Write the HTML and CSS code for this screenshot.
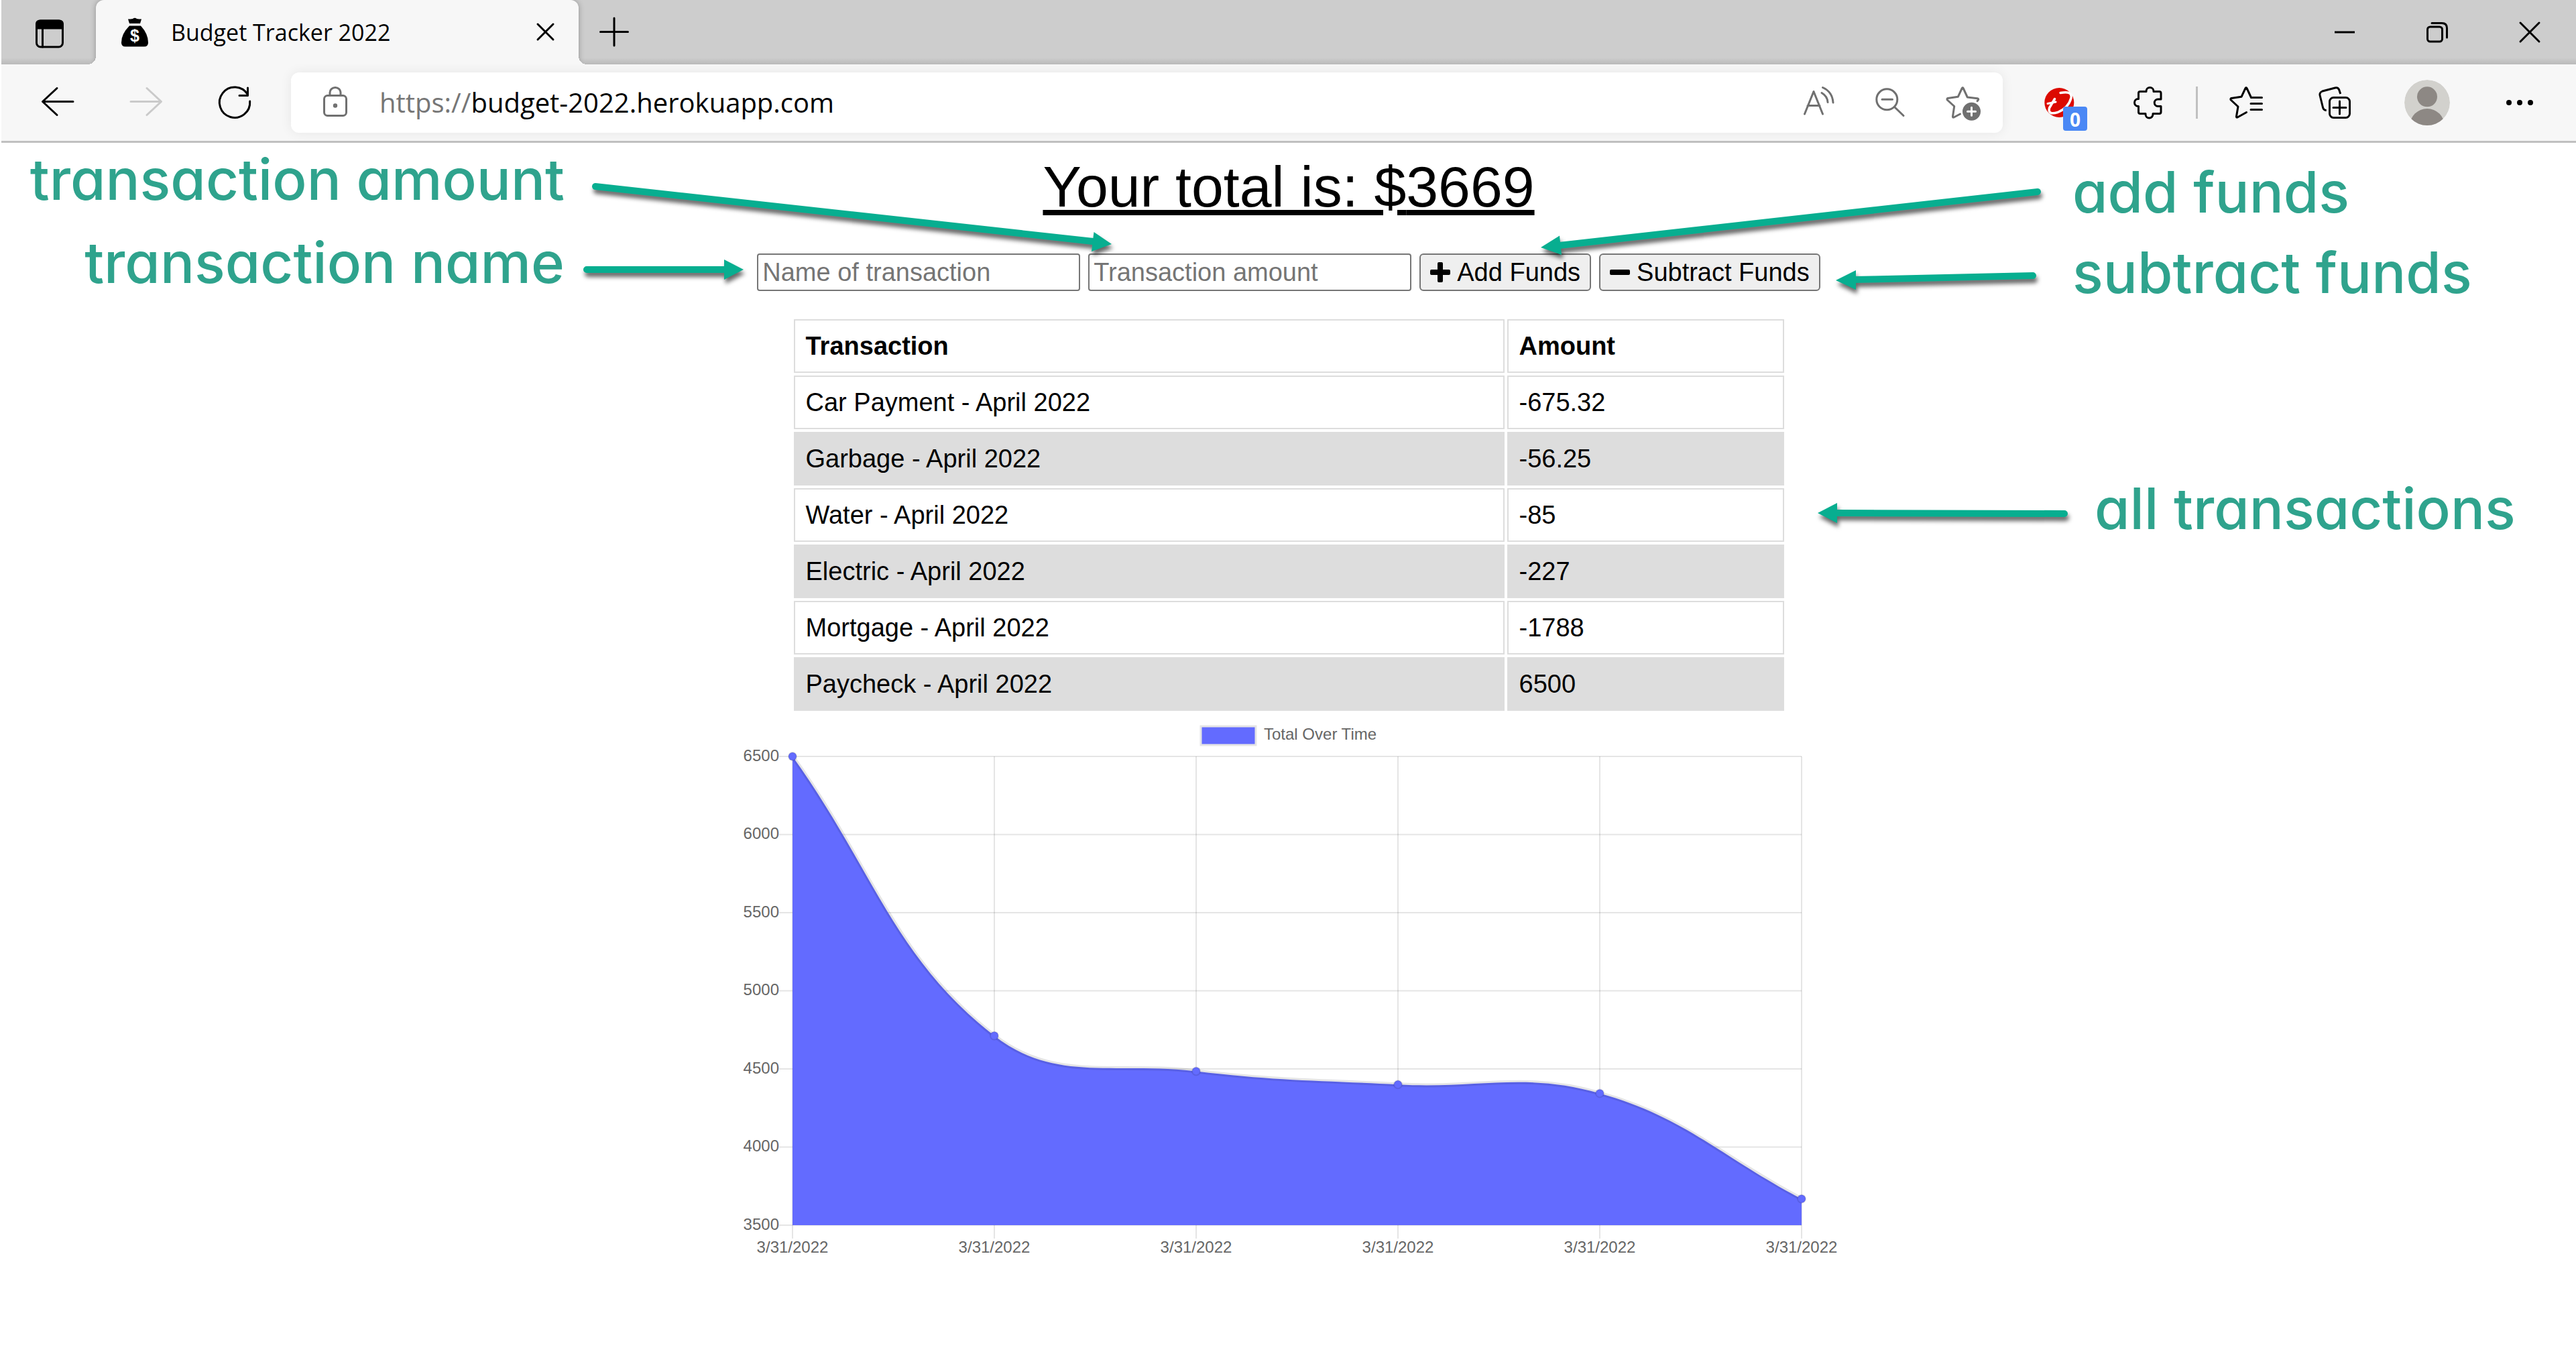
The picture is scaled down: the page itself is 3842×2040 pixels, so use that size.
FILE: index.html
```html
<!DOCTYPE html>
<html lang="en">
<head>
<meta charset="utf-8">
<title>Budget Tracker 2022</title>
<link rel="stylesheet" href="styles.css">
</head>
<body>
<header class="browser">
  <div class="tab-strip">
    <button class="icon-button tab-actions" aria-label="Tab actions">
      <svg class="icon" viewBox="0 0 60 60"><rect x="10.500" y="13" width="39" height="39" rx="6"/><path d="M10.500 24V18q0-5 5-5h29q5 0 5 5v6Z" fill="#000"/><path d="M19.500 24v28"/></svg>
    </button>
    <div class="tab">
      <svg class="favicon" viewBox="0 0 42 44"><path d="M11 2.500q4 0 7-.5 3-2.500 6 0 3 .5 7 .5l-2 6.500H13Z"/><path d="M13 12.500h17q11 12 11 25 0 6-6 6H7q-6 0-6-6 0-13 12-25Z"/><text x="21" y="36" text-anchor="middle" class="favicon-sign">$</text></svg>
      <span class="tab-title">Budget Tracker 2022</span>
      <button class="icon-button" aria-label="Close tab">
        <svg class="icon" viewBox="0 0 60 60"><path d="M18 18l23 23M41 18L18 41"/></svg>
      </button>
    </div>
    <button class="icon-button" aria-label="New tab">
      <svg class="icon" viewBox="0 0 60 60"><path d="M30 9v41M9.500 29.500h41"/></svg>
    </button>
    <div class="window-controls">
      <button class="window-button" aria-label="Minimize"><svg class="icon" viewBox="0 0 60 60"><path d="M15 30h30" stroke-linecap="butt"/></svg></button>
      <button class="window-button" aria-label="Restore"><svg class="icon" viewBox="0 0 60 60"><rect x="15.500" y="22" width="22" height="22" rx="4"/><path d="M22 16.500h15q7.500 0 7.500 7.500v14"/></svg></button>
      <button class="window-button" aria-label="Close window"><svg class="icon" viewBox="0 0 60 60"><path d="M16 16l28 28M44 16L16 44"/></svg></button>
    </div>
  </div>
  <div class="toolbar">
    <nav class="history">
      <button class="icon-button" aria-label="Back"><svg class="icon" viewBox="0 0 60 60"><path d="M53 28.500H8M29 8.500L7.500 28.500 29 48.500"/></svg></button>
      <button class="icon-button disabled" aria-label="Forward"><svg class="icon" viewBox="0 0 60 60"><path d="M7 28.500h45M31 8.500l21.500 20L31 48.500"/></svg></button>
      <button class="icon-button" aria-label="Refresh"><svg class="icon" viewBox="0 0 60 60"><path d="M49.500 18A22.700 22.700 0 1 0 52.700 28M49.500 8v11.500H37"/></svg></button>
    </nav>
    <div class="address">
      <svg class="icon muted" viewBox="0 0 60 60"><rect x="13.500" y="19.500" width="33" height="30" rx="5"/><path d="M22 19v-4a8 7.500 0 0 1 16 0v4"/><circle cx="30" cy="34.500" r="1.700"/></svg>
      <p class="url"><span class="scheme">https://</span>budget-2022.herokuapp.com</p>
      <div class="address-actions">
        <button class="icon-button muted" aria-label="Read aloud"><svg class="icon" viewBox="0 0 60 60"><path d="M8.500 47L22 13.500 35.500 47M13 34.500h18M34 15.500q8.500 5 9 14M35.500 7.500Q50 14 51 30"/></svg></button>
        <button class="icon-button muted" aria-label="Zoom out"><svg class="icon" viewBox="0 0 60 60"><circle cx="23.300" cy="25.300" r="15.500"/><path d="M16 25.300h15.500M34.500 36.500L48 49.500"/></svg></button>
        <button class="icon-button muted" aria-label="Add to favorites"><svg class="icon" viewBox="0 0 60 60"><path d="M24.500 47L15 52q-1.800.5-1.500-1.500l2.200-15L5.300 26q-1-1.800.8-2.500l15.200-2.200 6-12.800q.9-1.500 1.800 0l6.200 13.500 14.700 1.700q2.500.6 1.500 2.200l-1.500 1.800"/><circle cx="41.500" cy="43.300" r="13.500" fill="currentColor" stroke="none"/><path d="M35.500 43.300h12M41.500 37.300v12" stroke="#fff"/></svg></button>
      </div>
    </div>
    <nav class="extensions">
      <button class="icon-button has-badge" aria-label="Security extension">
        <svg class="icon" viewBox="0 0 60 60"><circle cx="30.300" cy="30" r="22" fill="#dc0a00" stroke="none"/><path d="M32 15.500Q50 12 48 23 44 38 28 44.500 13 49 15.500 38L23.500 24.500" stroke="#fff" stroke-width="3.500"/><path d="M13 31.500L25 29" stroke="#fff"/></svg>
        <span class="badge">0</span>
      </button>
      <div class="favorites-group">
        <button class="icon-button" aria-label="Extensions"><svg class="icon" viewBox="0 0 60 60"><path d="M17 13.500h9V13a5.500 5.500 0 0 1 11 0v.5h8.500q2.500 0 2.500 2.500v9h-4.500a5 5 0 0 0 0 10.500H48V44q0 2.500-2.500 2.500H36v1a5.500 5.500 0 0 1-11 0v-1h-8q-2.500 0-2.500-2.500v-8.500H14a5.500 5.500 0 0 1 0-11h.5V16q0-2.500 2.500-2.500Z"/></svg></button>
        <span class="divider"></span>
        <button class="icon-button" aria-label="Favorites"><svg class="icon" viewBox="0 0 60 60"><path d="M32.500 44.500L19 52q-1.800.5-1.500-1.500L20 36 9.200 26q-1-1.800.8-2.500l15-2.200 6-12.800q1-1.500 2 0l6.500 14h16M39 31.500h16.500M39 40.500h16.500"/></svg></button>
      </div>
      <button class="icon-button" aria-label="Collections"><svg class="icon" viewBox="0 0 60 60"><rect x="22.500" y="22.500" width="30" height="30" rx="6"/><path d="M37.500 28v19M28 37.500h19"/><path d="M38.700 17l-2-6q-1.700-4-6-3l-19 5q-4.500 2-3.700 6l4.700 19q1.300 3.500 5 3.500" stroke-linecap="butt"/></svg></button>
      <button class="profile" aria-label="Profile"><svg class="avatar" viewBox="0 0 68 68"><clipPath id="disc"><circle cx="34" cy="34" r="34"/></clipPath><g clip-path="url(#disc)"><circle cx="34" cy="34" r="34" fill="#d2d1cd"/><circle cx="34" cy="25.300" r="15" fill="#8d8884"/><circle cx="34" cy="69" r="26" fill="#8d8884"/></g></svg></button>
      <button class="icon-button" aria-label="Settings and more"><svg class="icon" viewBox="0 0 60 60"><g fill="#000" stroke="none"><circle cx="14" cy="30" r="4"/><circle cx="30" cy="30" r="4"/><circle cx="46" cy="30" r="4"/></g></svg></button>
    </nav>
  </div>
</header>

<main class="page">
  <aside class="notes notes-left">
    <p class="note">transaction amount</p>
    <p class="note">transaction name</p>
  </aside>

  <section class="tracker">
    <h1 class="total">Your total is: $<span id="total">3669</span></h1>
    <form class="entry">
      <input class="field" type="text" placeholder="Name of transaction" aria-label="Name of transaction">
      <input class="field" type="text" inputmode="numeric" placeholder="Transaction amount" aria-label="Transaction amount">
      <button class="action" type="button"><svg class="sign" viewBox="0 0 30 30"><rect y="11" width="30" height="8" rx="2"/><rect x="11" width="8" height="30" rx="2"/></svg>Add Funds</button>
      <button class="action" type="button"><svg class="sign" viewBox="0 0 30 30"><rect y="11" width="30" height="8" rx="2"/></svg>Subtract Funds</button>
    </form>
    <table class="transactions">
      <thead><tr><th class="name-column">Transaction</th><th>Amount</th></tr></thead>
      <tbody>
        <tr><td>Car Payment - April 2022</td><td>-675.32</td></tr>
        <tr><td>Garbage - April 2022</td><td>-56.25</td></tr>
        <tr><td>Water - April 2022</td><td>-85</td></tr>
        <tr><td>Electric - April 2022</td><td>-227</td></tr>
        <tr><td>Mortgage - April 2022</td><td>-1788</td></tr>
        <tr><td>Paycheck - April 2022</td><td>6500</td></tr>
      </tbody>
    </table>
    <svg class="chart" viewBox="0 0 1640 820" role="img" aria-label="Total over time">
      <rect x="689" y="19" width="82" height="28" fill="#636bff" stroke="#e5e5e5" stroke-width="3"/>
      <text x="783" y="39">Total Over Time</text>
      <path class="grid" d="M60 64H1585M60 180.500H1585M60 297H1585M60 413.500H1585M60 530H1585M60 646.500H1585M60 763H1585"/>
      <path class="grid" d="M80 64V783M381 64V783M682 64V783M983 64V783M1284 64V783M1585 64V783"/>
      <path class="area" d="M80 64C200 231 230 363 381 480.600C471 551 561 519 682 533.500C802 548 862 547 983 553.300C1103 560 1171 534 1284 566.400C1412 602 1465 661 1585 723.800V763H80Z"/>
      <path class="curve" d="M80 64C200 231 230 363 381 480.600C471 551 561 519 682 533.500C802 548 862 547 983 553.300C1103 560 1171 534 1284 566.400C1412 602 1465 661 1585 723.800"/>
      <g class="points"><circle cx="80" cy="64" r="6"/><circle cx="381" cy="480.600" r="6"/><circle cx="682" cy="533.500" r="6"/><circle cx="983" cy="553.300" r="6"/><circle cx="1284" cy="566.400" r="6"/><circle cx="1585" cy="723.800" r="6"/></g>
      <g text-anchor="end"><text x="60" y="71">6500</text><text x="60" y="187">6000</text><text x="60" y="304">5500</text><text x="60" y="420">5000</text><text x="60" y="537">4500</text><text x="60" y="653">4000</text><text x="60" y="770">3500</text></g>
      <g text-anchor="middle"><text x="80" y="804">3/31/2022</text><text x="381" y="804">3/31/2022</text><text x="682" y="804">3/31/2022</text><text x="983" y="804">3/31/2022</text><text x="1284" y="804">3/31/2022</text><text x="1585" y="804">3/31/2022</text></g>
    </svg>
  </section>

  <aside class="notes notes-right">
    <p class="note">add funds</p>
    <p class="note">subtract funds</p>
    <p class="note note-list">all transactions</p>
  </aside>

  <svg class="arrows" viewBox="722 213 2400 600" aria-hidden="true">
    <path d="M888 278L1630 360M875 402H1082M3039 286L2326 366M3032 411L2766 417M3079 766L2738 765"/>
    <g><path d="M1658 364L1631.500 346 1628 375Z"/><path d="M1109 402L1080 387V417Z"/><path d="M2298 369L2326 351.500 2329 380Z"/><path d="M2738 418L2768 403V432Z"/><path d="M2711 765L2740 750V780Z"/></g>
  </svg>
</main>
</body>
</html>
```
FILE: styles.css
```css
* { box-sizing: border-box; }

body {
  margin: 0;
  padding-left: 2px;
  background: #fff;
  color: #000;
  font-family: "Liberation Sans", Arial, sans-serif;
  overflow-x: hidden;
}

button {
  margin: 0;
  padding: 0;
  border: 0;
  background: none;
  color: inherit;
  font: inherit;
}

p, h1 { margin: 0; }

/* Browser chrome */
.browser {
  border-bottom: 3px solid #c0c0c0;
  background: #f7f7f7;
  font-family: "Open Sans", "Noto Sans", sans-serif;
}

.icon-button { flex: none; width: 60px; height: 60px; color: #000; }

.icon {
  display: block;
  flex: none;
  width: 60px;
  height: 60px;
  fill: none;
  stroke: currentColor;
  stroke-width: 3;
  stroke-linecap: round;
  stroke-linejoin: round;
}

.muted { color: #707070; }
.disabled { color: #cacaca; }

.tab-strip {
  display: flex;
  align-items: center;
  height: 96px;
  background: linear-gradient(#cdcdcd 86px, #bababa);
}

.tab-actions { margin: 0 39px 0 42px; height: 64px; }

.tab {
  position: relative;
  display: flex;
  align-items: center;
  width: 720px;
  height: 96px;
  margin-right: 23px;
  padding: 0 19px 0 37px;
  border-radius: 12px 12px 0 0;
  background: #f7f7f7;
  box-shadow: 0 0 9px rgba(0, 0, 0, .3);
  clip-path: inset(0 -12px 0 -12px);
}

.tab::before, .tab::after {
  content: "";
  position: absolute;
  bottom: 0;
  width: 12px;
  height: 12px;
}
.tab::before { right: 100%; background: radial-gradient(circle at 0 0, transparent 12px, #f7f7f7 12px); }
.tab::after { left: 100%; background: radial-gradient(circle at 100% 0, transparent 12px, #f7f7f7 12px); }

.favicon { width: 42px; height: 44px; margin-right: 33px; }
.favicon-sign { fill: #fff; font: bold 25px "Liberation Sans", sans-serif; }

.tab-title { flex: 1; font-size: 34px; line-height: 48px; }

.window-controls { display: flex; margin-left: auto; }
.window-button { display: flex; justify-content: center; align-items: center; width: 138px; height: 96px; }

.toolbar {
  display: flex;
  align-items: center;
  gap: 54px;
  height: 114px;
  padding: 0 54px;
}

.history { display: flex; gap: 72px; }

.address {
  flex: 1;
  display: flex;
  align-items: center;
  height: 90px;
  padding: 0 28px 0 36px;
  border-radius: 12px;
  background: #fff;
  box-shadow: 0 0 18px rgba(0, 0, 0, .07);
}

.url { flex: 1; margin-left: 36px; font-size: 40px; line-height: 56px; }
.scheme { color: #767676; }
.address-actions { display: flex; gap: 48px; }

.extensions { display: flex; align-items: center; gap: 74px; }
.favorites-group { display: flex; align-items: center; gap: 40px; }
.divider { width: 3px; height: 48px; background: #c0c0c0; }

.has-badge { position: relative; }
.badge {
  position: absolute;
  left: 36px;
  top: 36px;
  width: 36px;
  height: 36px;
  border-radius: 4px;
  background: #4a88f5;
  color: #fff;
  font-size: 28px;
  font-weight: 700;
  line-height: 38px;
  text-align: center;
}

.profile, .avatar { display: block; width: 68px; height: 68px; }

/* Tracker page */
.page {
  position: relative;
  display: grid;
  grid-template-columns: 1fr 1640px 1fr;
}

.tracker { display: flex; flex-direction: column; align-items: center; padding-top: 15px; }

.total {
  font-size: 86px;
  font-weight: 400;
  line-height: 100px;
  text-decoration: underline;
  text-decoration-thickness: 8px;
  text-underline-offset: 5px;
}

.entry { display: flex; gap: 12px; margin: 50px 0 38px; font-size: 38px; }

.field {
  width: 482px;
  height: 56px;
  padding: 0 6px;
  border: 2px solid #767676;
  border-radius: 4px;
  background: #fff;
  color: #000;
  font: inherit;
}
.field::placeholder { color: #757575; opacity: 1; }

.action {
  display: flex;
  align-items: center;
  gap: 10px;
  height: 56px;
  padding: 0 14px;
  border: 2px solid #767676;
  border-radius: 6px;
  background: #efefef;
}

.sign { width: 30px; height: 30px; }

.transactions {
  width: 1485px;
  border-spacing: 4px;
  table-layout: fixed;
  font-size: 38px;
  line-height: 44px;
  text-align: left;
}
.name-column { width: 1060px; }
.transactions th, .transactions td { padding: 16px; border: 2px solid #ddd; }
.transactions tbody tr:nth-child(even) td { background: #ddd; }

.chart { width: 100%; font-size: 24px; fill: #666; }
.grid { fill: none; stroke: rgba(0, 0, 0, .1); stroke-width: 2; }
.area { fill: #636bff; }
.curve { fill: none; stroke: rgba(0, 0, 0, .1); stroke-width: 6; }
.points { fill: #636bff; stroke: rgba(0, 0, 0, .1); stroke-width: 2; }

/* Callouts around the tracker */
.note {
  color: #2fa38d;
  font-family: Inter, "Open Sans", sans-serif;
  font-size: 85px;
  font-weight: 500;
  font-feature-settings: "cv11";
  line-height: 100px;
  white-space: nowrap;
}

.notes { display: flex; flex-direction: column; }
.notes-left { align-items: flex-end; gap: 24px; padding: 5px 260px 0 0; }
.notes-right { gap: 20px; padding: 24px 0 0 349px; }
.note-list { margin: 232px 0 0 33px; }

.arrows {
  position: absolute;
  top: 0;
  left: 50%;
  width: 2400px;
  height: 600px;
  margin-left: -1200px;
  fill: none;
  stroke: #07ae90;
  stroke-width: 10;
  stroke-linecap: round;
  filter: drop-shadow(2px 6px 3px rgba(0, 0, 0, .6));
  pointer-events: none;
}
.arrows g { fill: #07ae90; stroke: none; }
```
